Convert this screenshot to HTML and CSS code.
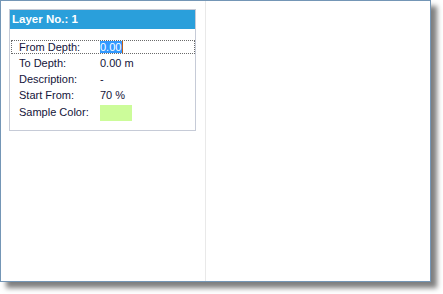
FILE: index.html
```html
<!DOCTYPE html>
<html>
<head>
<meta charset="utf-8">
<link rel="stylesheet" href="styles.css">
</head>
<body>
<div class="frame">
  <div class="left">
    <div class="card">
      <div class="card-head">Layer No.: 1</div>
      <div class="card-body">
        <div class="row focus"><span class="lbl">From Depth:</span><span class="val"><span class="sel">0.00</span><span class="caret"></span></span></div>
        <div class="row"><span class="lbl">To Depth:</span><span class="val">0.00 m</span></div>
        <div class="row"><span class="lbl">Description:</span><span class="val">-</span></div>
        <div class="row"><span class="lbl">Start From:</span><span class="val">70 %</span></div>
        <div class="row swatch-row"><span class="lbl">Sample Color:</span><span class="val"><span class="swatch"></span></span></div>
      </div>
    </div>
  </div>
  <div class="divider"></div>
  <div class="right"></div>
</div>
</body>
</html>
```
FILE: styles.css
```css
html, body {
  margin: 0;
  padding: 0;
  background: #ffffff;
}
body {
  width: 443px;
  height: 294px;
  overflow: hidden;
  font-family: "Liberation Sans", Arial, sans-serif;
  font-size: 11px;
  color: #14143a;
}
.frame {
  box-sizing: border-box;
  width: 431px;
  height: 282px;
  border: 1px solid #7496b6;
  background: #ffffff;
  display: flex;
  box-shadow: 6px 6px 5px rgba(0, 0, 0, 0.5);
}
.left {
  width: 204px;
  padding: 8px 0 0 8px;
  box-sizing: border-box;
}
.divider {
  width: 1px;
  background: #e9e9e9;
}
.right {
  flex: 1;
}
.card {
  box-sizing: border-box;
  width: 187px;
  border: 1px solid #c6cbd7;
}
.card-head {
  height: 19px;
  line-height: 19px;
  background: #2a9fdb;
  color: #ffffff;
  font-weight: bold;
  font-size: 11.5px;
  padding-left: 2px;
}
.card-body {
  padding: 10px 0 9px 1px;
}
.row {
  height: 16px;
  line-height: 16px;
  display: flex;
  position: relative;
}
.lbl {
  width: 81px;
  padding-left: 8px;
}
.val {
  display: flex;
  align-items: center;
}
.focus::after {
  content: "";
  position: absolute;
  left: 0;
  right: 0;
  top: 1px;
  bottom: 1px;
  border: 1px dotted #6a6a6a;
}
.sel {
  background: #3399ff;
  color: #ffffff;
  line-height: 12px;
  height: 12px;
  padding-right: 1px;
}
.caret {
  width: 1px;
  height: 13px;
  background: #c0601a;
}
.swatch-row {
  height: 18px;
  line-height: 18px;
}
.swatch {
  display: block;
  width: 32px;
  height: 16px;
  background: #ccfc9a;
  margin-top: 1px;
}
```
